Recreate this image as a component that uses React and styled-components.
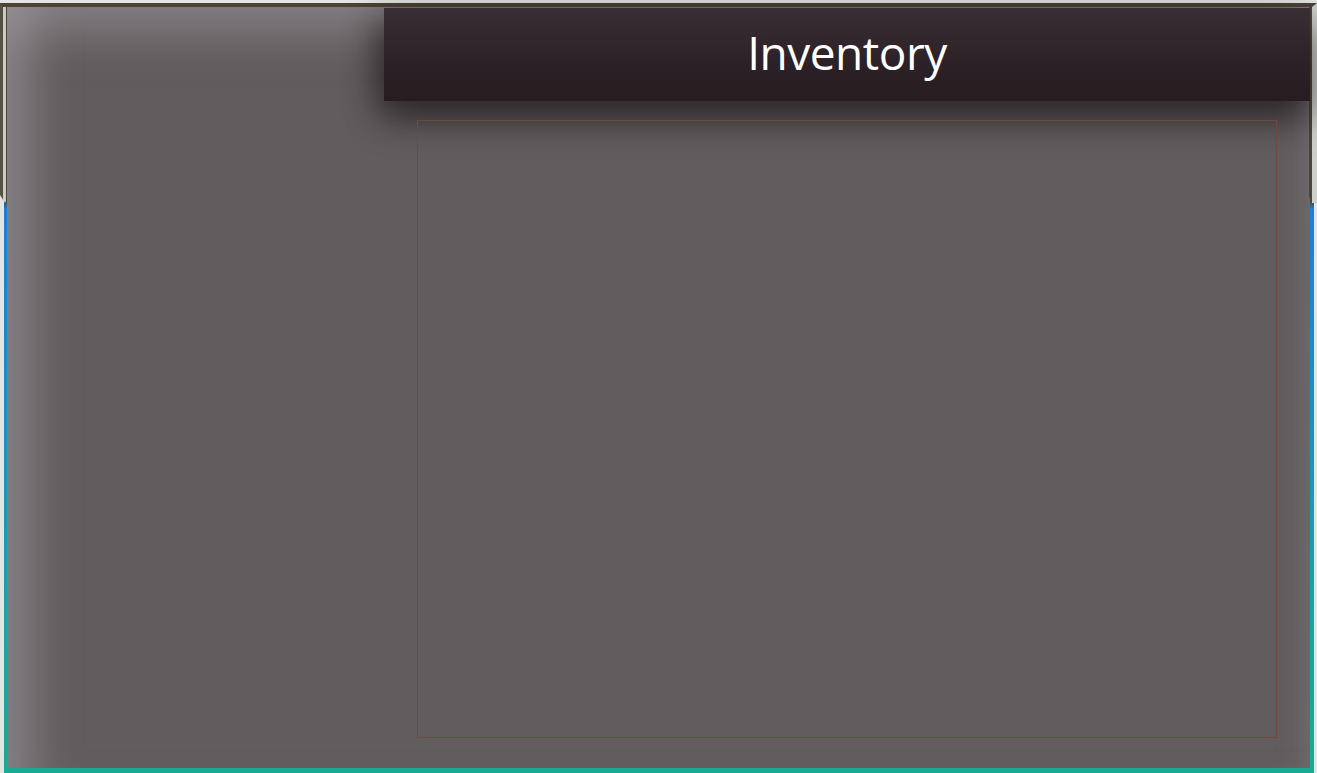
import React from "react";
import styled, { createGlobalStyle } from "styled-components";

const Global = createGlobalStyle`
  html, body { margin: 0; padding: 0; background: #e4e4e2; }
  body { font-family: "Open Sans", "Noto Sans", sans-serif; overflow: hidden; }
`;

const Device = styled.div`
  position: relative;
  width: 1317px;
  height: 773px;
  box-sizing: border-box;
  padding: 3px 3px 0 4px;
  background: #e4e4e2;
`;

const Screen = styled.div`
  height: 100%;
  box-sizing: border-box;
  padding: 4px 4px 5px 3px;
  background: linear-gradient(
    to bottom,
    #4b4437 0px,
    #4b4437 198px,
    #1f7ed9 206px,
    #1a8fc6 380px,
    #18a3a6 600px,
    #19ab92 100%
  );
  display: flex;
`;

const BezelTop = styled.div`
  position: absolute;
  top: 3px;
  left: 0;
  right: 0;
  height: 200px;
  box-sizing: border-box;
  border-left: 3px solid #575143;
  border-right: 5px solid #cfd0cc;
  border-top: 4px solid #4a4336;
  box-shadow: inset 3px 0 0 #c9cbc6, inset -3px 0 0 #4d4538;
  pointer-events: none;
  clip-path: polygon(0 0, 100% 0, 100% 100%, calc(100% - 5px) 100%, calc(100% - 8px) 97%, 8px 97%, 5px 100%, 0 96%);
`;

const Content = styled.main`
  flex: 1;
  display: flex;
  flex-direction: column;
  padding-top: 1px;
  background: #615d5e;
  box-shadow:
    inset 60px 0 45px -35px rgba(165, 160, 165, 0.55),
    inset 0 60px 45px -35px rgba(165, 160, 165, 0.5),
    inset -30px 0 30px -26px rgba(160, 155, 160, 0.3);
`;

const Header = styled.header`
  margin-left: 377px;
  height: 93px;
  display: flex;
  align-items: center;
  justify-content: center;
  background: linear-gradient(to bottom, #392e34 0%, #2b2126 60%, #271d21 100%);
  box-shadow: 0 18px 34px rgba(28, 24, 26, 0.6), -10px 10px 30px rgba(28, 24, 26, 0.4);
  position: relative;
  z-index: 1;
`;

const Title = styled.h1`
  margin: -6px 0 0 0;
  color: #ffffff;
  font-family: "Open Sans", "Noto Sans", sans-serif;
  font-weight: 400;
  font-size: 46px;
  letter-spacing: -0.5px;
  line-height: 1;
`;

const Panel = styled.section`
  flex: 1;
  margin: 19px 33px 30px 410px;
  border: 1px solid #70483e;
  position: relative;
  z-index: 2;
`;

export default function App() {
  return (
    <>
      <Global />
      <Device>
        <Screen>
          <Content>
            <Header>
              <Title>Inventory</Title>
            </Header>
            <Panel />
          </Content>
        </Screen>
        <BezelTop />
      </Device>
    </>
  );
}
